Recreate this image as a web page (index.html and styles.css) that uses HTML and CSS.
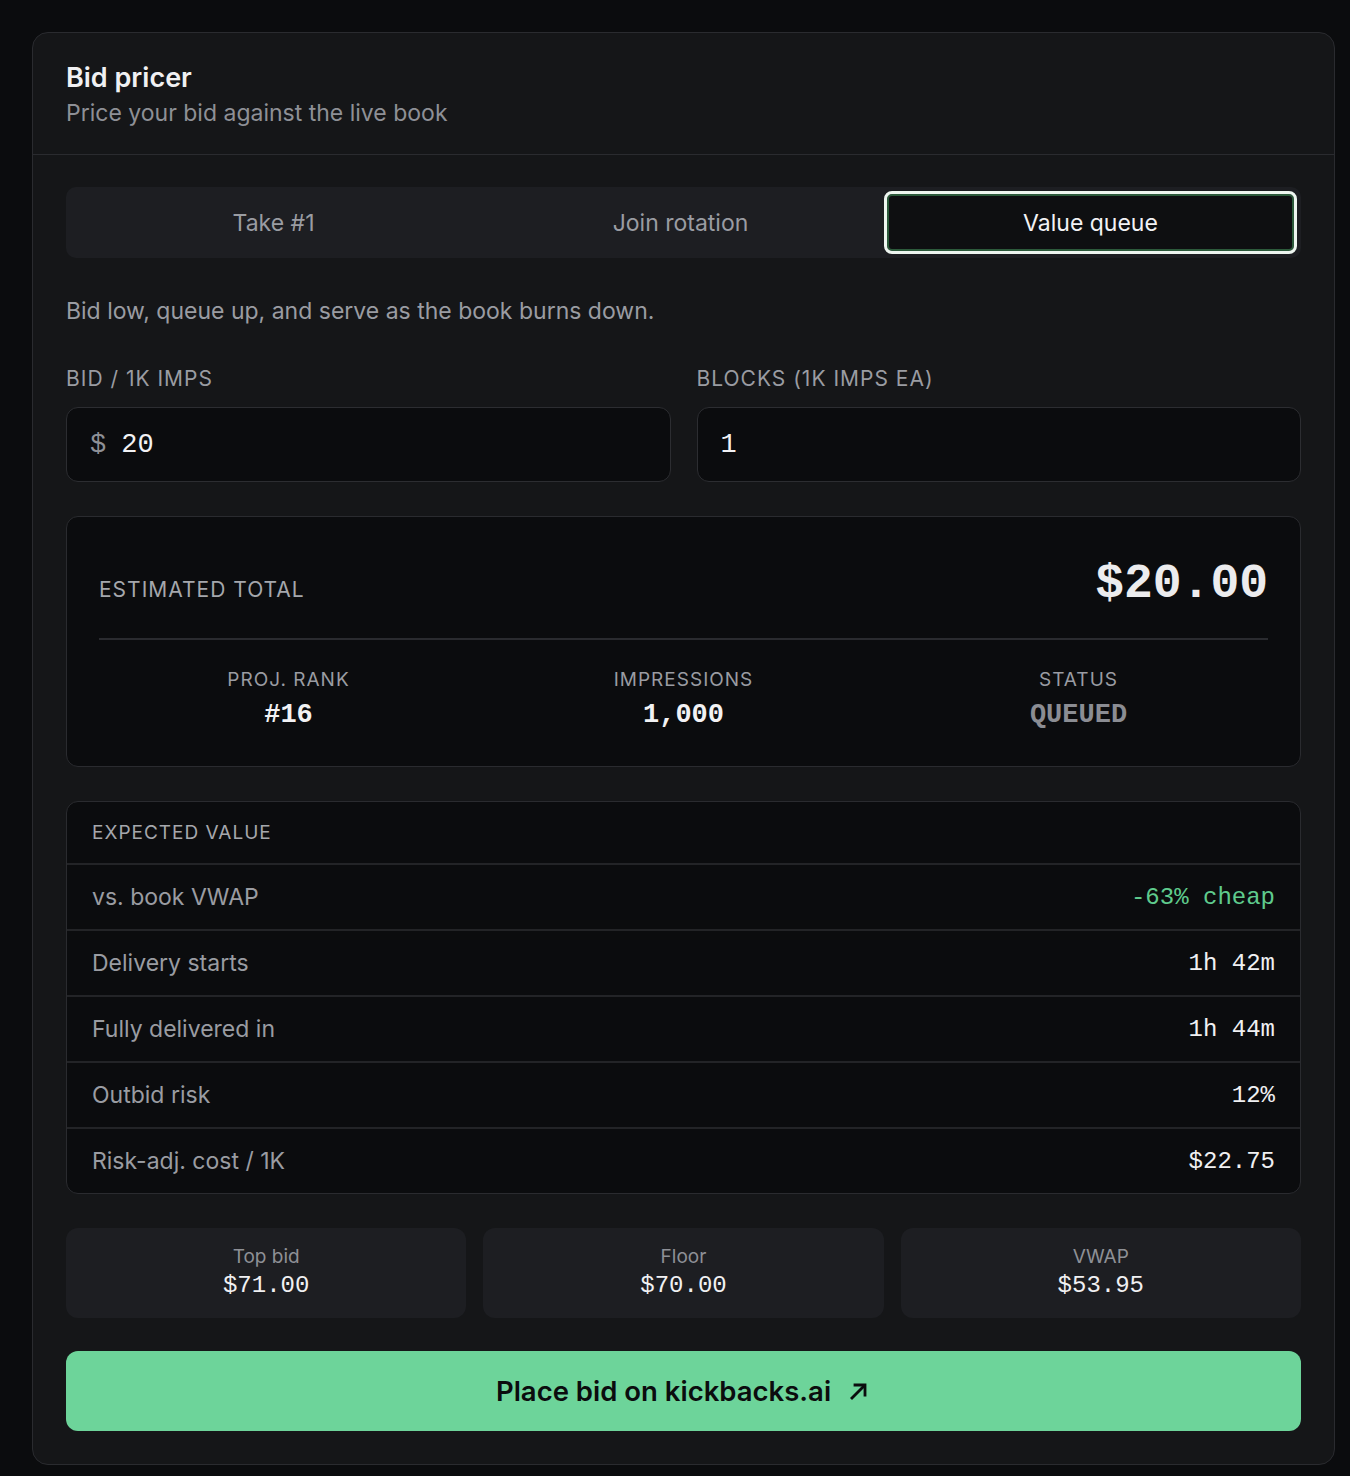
FILE: index.html
```html
<!DOCTYPE html>
<html lang="en">
<head>
    <meta charset="UTF-8">
    <meta name="viewport" content="width=device-width, initial-scale=1.0">
    <title>Bid pricer</title>
    <link rel="stylesheet" href="styles.css">
</head>
<body>
    <div class="card">
        <div class="card-head">
            <div class="title">Bid pricer</div>
            <div class="subtitle">Price your bid against the live book</div>
        </div>
        <div class="card-body">
            <div class="tabs">
                <div class="tab">Take #1</div>
                <div class="tab">Join rotation</div>
                <div class="tab active">Value queue</div>
            </div>

            <p class="desc">Bid low, queue up, and serve as the book burns down.</p>

            <div class="fields">
                <div class="field">
                    <label class="label">BID / 1K IMPS</label>
                    <div class="input"><span class="prefix">$</span><span>20</span></div>
                </div>
                <div class="field">
                    <label class="label">BLOCKS (1K IMPS EA)</label>
                    <div class="input"><span>1</span></div>
                </div>
            </div>

            <div class="estimate">
                <div class="est-top">
                    <div class="est-label">ESTIMATED TOTAL</div>
                    <div class="est-value">$20.00</div>
                </div>
                <div class="est-stats">
                    <div class="stat">
                        <div class="stat-label">PROJ. RANK</div>
                        <div class="stat-value">#16</div>
                    </div>
                    <div class="stat">
                        <div class="stat-label">IMPRESSIONS</div>
                        <div class="stat-value">1,000</div>
                    </div>
                    <div class="stat">
                        <div class="stat-label">STATUS</div>
                        <div class="stat-value muted">QUEUED</div>
                    </div>
                </div>
            </div>

            <div class="ev">
                <div class="ev-head">EXPECTED VALUE</div>
                <div class="ev-row"><span>vs. book VWAP</span><span class="num green">-63% cheap</span></div>
                <div class="ev-row"><span>Delivery starts</span><span class="num">1h 42m</span></div>
                <div class="ev-row"><span>Fully delivered in</span><span class="num">1h 44m</span></div>
                <div class="ev-row"><span>Outbid risk</span><span class="num">12%</span></div>
                <div class="ev-row"><span>Risk-adj. cost / 1K</span><span class="num">$22.75</span></div>
            </div>

            <div class="book">
                <div class="book-card">
                    <div class="book-label">Top bid</div>
                    <div class="book-value">$71.00</div>
                </div>
                <div class="book-card">
                    <div class="book-label">Floor</div>
                    <div class="book-value">$70.00</div>
                </div>
                <div class="book-card">
                    <div class="book-label">VWAP</div>
                    <div class="book-value">$53.95</div>
                </div>
            </div>

            <button class="cta">
                Place bid on kickbacks.ai
                <svg width="24" height="24" viewBox="0 0 24 24" fill="none" stroke="currentColor" stroke-width="2.8" stroke-linecap="square">
                    <path d="M5 19L17 7"/>
                    <path d="M8 6h10v10"/>
                </svg>
            </button>
        </div>
    </div>
</body>
</html>
```

FILE: styles.css
```css
* {
    box-sizing: border-box;
}
body {
    margin: 0;
    padding: 32px 15px 13px 32px;
    background-color: #0b0c0e;
    color: #ececee;
    font-family: Inter, "Noto Sans", sans-serif;
}
.card {
    width: 1303px;
    background-color: #151618;
    border: 1px solid #2a2b2f;
    border-radius: 16px;
}
.card-head {
    padding: 28px 33px 26px;
    border-bottom: 1px solid #2a2b2f;
}
.title {
    font-size: 27px;
    font-weight: 600;
    line-height: 34px;
    color: #f0f0f2;
}
.subtitle {
    font-size: 23px;
    line-height: 30px;
    margin-top: 3px;
    color: #8e9096;
}
.card-body {
    padding: 32px 33px 33px;
}
.tabs {
    display: flex;
    padding: 4px;
    height: 71px;
    background-color: #1d1e22;
    border-radius: 10px;
}
.tab {
    flex: 1;
    display: flex;
    align-items: center;
    justify-content: center;
    font-size: 23px;
    color: #9a9ca2;
    border-radius: 8px;
}
.tab.active {
    background-color: #0e0f11;
    color: #f2f2f4;
    border: 3px solid #eef6f0;
    box-shadow: inset 0 0 0 2px #2c5a3b;
}
.desc {
    margin: 38px 0 0;
    font-size: 23px;
    line-height: 30px;
    color: #9a9ca2;
}
.fields {
    display: flex;
    gap: 26px;
    margin-top: 40px;
}
.field {
    flex: 1;
}
.label {
    display: block;
    font-size: 21px;
    line-height: 26px;
    letter-spacing: 1px;
    color: #9a9ca2;
}
.input {
    margin-top: 15px;
    height: 75px;
    display: flex;
    align-items: center;
    gap: 15px;
    padding: 0 23px;
    background-color: #0b0c0e;
    border: 1px solid #2c2d31;
    border-radius: 12px;
    font-family: "Liberation Mono", "DejaVu Sans Mono", monospace;
    font-size: 27px;
    color: #f2f2f4;
}
.prefix {
    color: #8e9096;
}
.estimate {
    margin-top: 34px;
    padding: 33px 32px 34px;
    background-color: #0b0c0e;
    border: 1px solid #2a2b2f;
    border-radius: 12px;
}
.est-top {
    display: flex;
    justify-content: space-between;
    align-items: baseline;
    padding-top: 4px;
    padding-bottom: 24px;
    border-bottom: 2px solid #2a2b2f;
}
.est-label {
    font-size: 21px;
    letter-spacing: 1px;
    color: #a5a7ac;
}
.est-value {
    font-family: "Liberation Mono", "DejaVu Sans Mono", monospace;
    font-size: 48px;
    line-height: 60px;
    font-weight: 700;
    color: #ececee;
}
.est-stats {
    display: flex;
    padding-top: 28px;
    margin: 0 -8px;
}
.stat {
    flex: 1;
    text-align: center;
}
.stat-label {
    font-size: 19px;
    line-height: 24px;
    letter-spacing: 1px;
    color: #9a9ca2;
}
.stat-value {
    margin-top: 6px;
    font-family: "Liberation Mono", "DejaVu Sans Mono", monospace;
    font-size: 27px;
    line-height: 34px;
    font-weight: 700;
    color: #f2f2f4;
}
.stat-value.muted {
    color: #8b8d93;
}
.ev {
    margin-top: 34px;
    background-color: #0b0c0e;
    border: 1px solid #2a2b2f;
    border-radius: 12px;
    overflow: hidden;
}
.ev-head {
    height: 61px;
    display: flex;
    align-items: center;
    padding: 0 25px;
    font-size: 19px;
    letter-spacing: 1px;
    color: #a5a7ac;
}
.ev-row {
    height: 66px;
    display: flex;
    align-items: center;
    justify-content: space-between;
    padding: 0 25px;
    border-top: 2px solid #232427;
    font-size: 23px;
    color: #9a9ca2;
}
.num {
    font-family: "Liberation Mono", "DejaVu Sans Mono", monospace;
    font-size: 24px;
    color: #f0f0f2;
}
.num.green {
    color: #5fcb8d;
}
.book {
    display: flex;
    gap: 17px;
    margin-top: 34px;
}
.book-card {
    flex: 1;
    height: 90px;
    padding-top: 16px;
    text-align: center;
    background-color: #1d1e22;
    border-radius: 12px;
}
.book-label {
    font-size: 19px;
    line-height: 26px;
    color: #8e9096;
}
.book-value {
    font-family: "Liberation Mono", "DejaVu Sans Mono", monospace;
    font-size: 24px;
    line-height: 32px;
    color: #f0f0f2;
}
.cta {
    margin-top: 33px;
    width: 100%;
    height: 80px;
    display: flex;
    align-items: center;
    justify-content: center;
    gap: 16px;
    border: none;
    border-radius: 12px;
    background-color: #6dd49a;
    color: #0b0c0e;
    font-family: Inter, "Noto Sans", sans-serif;
    font-size: 27.5px;
    font-weight: 600;
}
```
